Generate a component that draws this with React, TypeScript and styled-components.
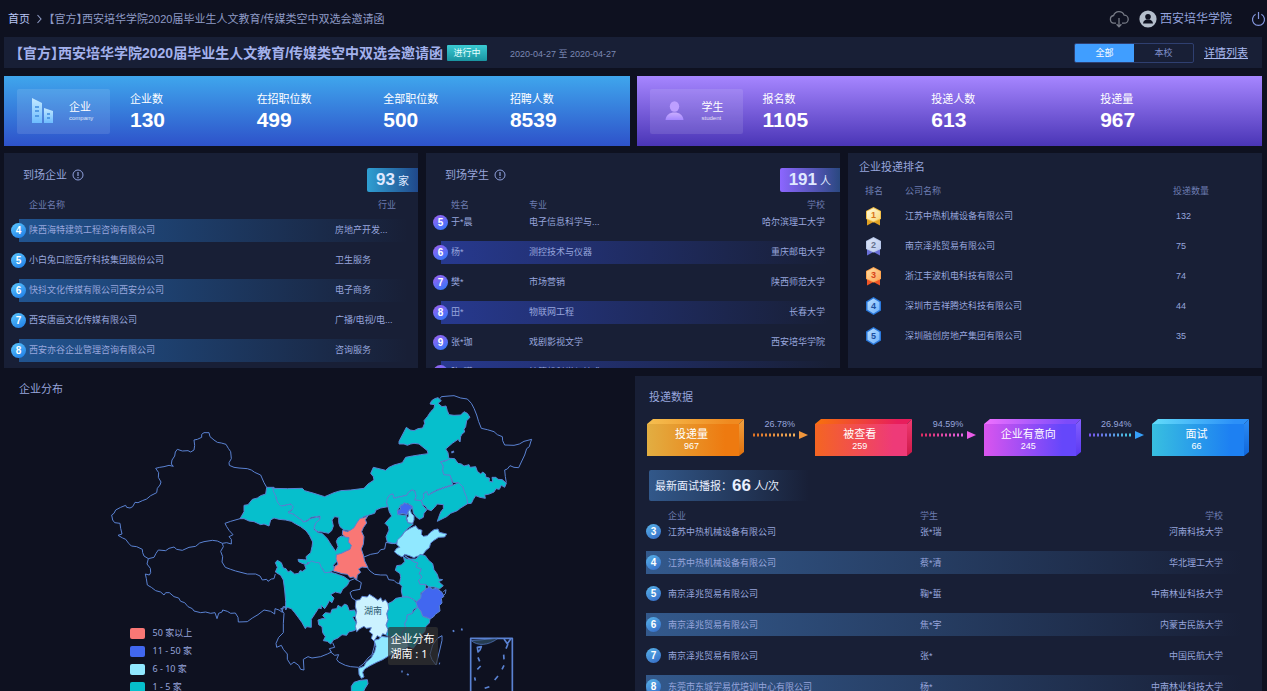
import React from 'react';
import styled, { createGlobalStyle } from 'styled-components';

const color = {
  page: '#0e1120',
  panel: '#181f36',
  text: '#97a5dc',
  muted: '#6d7cb0',
  title: '#a3b1ec',
};

const GlobalStyle = createGlobalStyle`
  * { box-sizing: border-box; }
  body {
    margin: 0;
    background: ${color.page};
    color: ${color.text};
    font-family: "Liberation Sans", "Noto Sans CJK SC", sans-serif;
    font-size: 11px;
    line-height: 14px;
  }
  h1, h2, p, dl, dt, dd, ol, ul { margin: 0; padding: 0; font-weight: normal; font-size: inherit; }
  svg { display: block; }
`;

/* ---------- page frame ---------- */

const Page = styled.div`
  height: 100vh;
  overflow: hidden;
  padding: 0 5px 0 4px;
  background: ${color.page};
`;

const TopBar = styled.header`
  display: flex;
  align-items: center;
  justify-content: space-between;
  height: 37px;
  margin-right: -5px;
  padding: 0 1px 0 4px;
`;

const Breadcrumb = styled.nav`
  display: flex;
  align-items: center;
  gap: 6px;
  white-space: nowrap;
  color: #8f9bc6;
  font-feature-settings: "halt";
`;

const HomeLink = styled.a`
  color: #b9c6f5;
  text-decoration: none;
`;

const UserArea = styled.div`
  display: flex;
  align-items: center;
  color: #93a3de;
`;

const IconButton = styled.button`
  display: flex;
  padding: 0;
  border: 0;
  background: none;
  color: inherit;
`;

const UserAvatar = styled.span`
  margin-left: 10px;
`;

const UserName = styled.span`
  margin: 0 19px 0 3px;
  font-size: 12px;
  line-height: 18px;
`;

const TitleBar = styled.div`
  display: flex;
  align-items: center;
  height: 31px;
  padding: 0 14px 0 12px;
  background: ${color.panel};
`;

const PageTitle = styled.h1`
  color: ${color.title};
  font-size: 14px;
  line-height: 20px;
  font-weight: bold;
  white-space: nowrap;
  font-feature-settings: "halt";
`;

const StatusTag = styled.span`
  width: 40px;
  margin-left: 4px;
  border-radius: 1px;
  background: linear-gradient(#3acad2, #1a94a1);
  color: #e6ffff;
  font-size: 9px;
  line-height: 16px;
  text-align: center;
`;

const DateRange = styled.span`
  margin: 2px auto 0 23px;
  color: #7c89b3;
  font-size: 9px;
  white-space: nowrap;
`;

const Segmented = styled.div`
  display: flex;
  width: 120px;
  margin-right: 10px;
  border: 1px solid #2f3f70;
  border-radius: 2px;
`;

const SegmentButton = styled.button<{ $active?: boolean }>`
  flex: 1;
  height: 18px;
  padding: 0;
  border: 0;
  border-radius: ${p => (p.$active ? '1px 0 0 1px' : '0')};
  background: ${p => (p.$active ? '#409eff' : 'transparent')};
  color: ${p => (p.$active ? '#fff' : '#7f8fca')};
  font: 9px "Liberation Sans", "Noto Sans CJK SC", sans-serif;
`;

const DetailLink = styled.a`
  color: #a9b9ee;
`;

/* ---------- summary cards ---------- */

const CardRow = styled.div`
  display: grid;
  grid-template-columns: 1fr 1fr;
  gap: 7px;
  margin-top: 8px;
`;

const SummaryCard = styled.section<{ $from: string; $to: string }>`
  display: flex;
  align-items: center;
  height: 70px;
  padding-left: 13px;
  background: linear-gradient(${p => p.$from}, ${p => p.$to});
  color: #fff;
`;

const CardLogo = styled.div`
  display: flex;
  align-items: center;
  justify-content: space-between;
  width: 93px;
  height: 45px;
  margin-right: 13px;
  padding: 0 15px;
  border-radius: 2px;
  background: rgba(255, 255, 255, 0.11);
`;

const LogoCaption = styled.div`
  width: 26px;
  line-height: 14px;
  white-space: nowrap;
`;

const LogoSub = styled.div`
  font-size: 6px;
  line-height: 8px;
  opacity: 0.8;
`;

const StatList = styled.dl`
  display: flex;
  flex: 1;
`;

const Stat = styled.div`
  flex: 1;
  padding-left: 7px;
`;

const StatLabel = styled.dt`
  line-height: 16px;
  padding-top: 2px;
`;

const StatValue = styled.dd`
  font-size: 21px;
  line-height: 26px;
  font-weight: bold;
`;

/* ---------- panels ---------- */

const PanelRow = styled.div`
  display: grid;
  grid-template-columns: repeat(3, 1fr);
  gap: 8px;
  margin-top: 7px;
`;

const Panel = styled.section`
  overflow: hidden;
  background: ${color.panel};
`;

const ListPanel = styled(Panel)`
  height: 215px;
`;

const PanelHead = styled.div`
  display: flex;
  justify-content: space-between;
  height: 42px;
  padding-left: 19px;
`;

const PanelTitle = styled.h2`
  display: flex;
  align-items: center;
  gap: 5px;
  height: 43px;
  color: ${color.text};
`;

const CountTag = styled.p<{ $from: string; $to: string }>`
  align-self: flex-start;
  height: 24px;
  margin-top: 15px;
  padding: 0 9px;
  border-radius: 2px 0 0 2px;
  background: linear-gradient(to right, ${p => p.$from}, ${p => p.$to});
  color: #dfe8ff;
  line-height: 24px;
`;

const BigNumber = styled.b`
  margin-right: 3px;
  font-size: 17px;
`;

const Table = styled.table<{ $columns: string }>`
  display: block;
  font-size: 9px;
  line-height: 14px;
  thead, tbody { display: block; }
  tr {
    display: grid;
    grid-template-columns: ${p => p.$columns};
    align-items: center;
    white-space: nowrap;
  }
  th, td { padding: 0; text-align: left; }
  th { color: ${color.muted}; font-weight: normal; }
`;

const HeadRow = styled.tr<{ $height: number }>`
  height: ${p => p.$height}px;
`;

const PanelTable = styled(Table)`
  padding: 0 10px 0 7px;
`;

const ScrollBody = styled.tbody<{ $tuck?: number }>`
  margin-top: -${p => p.$tuck ?? 0}px;
`;

const BodyRow = styled.tr<{ $height: number; $stripe?: string; $inset?: number }>`
  height: ${p => p.$height}px;
  background: ${p => (p.$stripe ? `linear-gradient(to right, ${p.$stripe}, transparent)` : 'none')} no-repeat
    right center / calc(100% - ${p => p.$inset ?? 0}px) 23px;
`;

const RightCell = styled.td<{ $pad: number }>`
  && { text-align: right; padding-right: ${p => p.$pad}px; }
`;

const RightHead = styled.th<{ $pad: number }>`
  && { text-align: right; padding-right: ${p => p.$pad}px; }
`;

const IndexDot = styled.span<{ $from: string; $to: string }>`
  display: block;
  width: 15px;
  height: 15px;
  border-radius: 50%;
  background: linear-gradient(150deg, ${p => p.$from}, ${p => p.$to});
  color: #fff;
  font-size: 10px;
  line-height: 15px;
  font-weight: bold;
  text-align: center;
`;

const RankTitle = styled.h2`
  padding: 7px 0 7px 11px;
`;

const RankTable = styled(Table)`
  padding-left: 17px;
`;

const CountCell = styled.td`
  && { padding-left: 3px; }
`;

/* ---------- bottom area ---------- */

const BottomRow = styled.div`
  display: grid;
  grid-template-columns: 1fr 1fr;
  gap: 4px;
  margin-top: 8px;
`;

const MapTitle = styled.h2`
  padding: 7px 0 0 15px;
  line-height: 12px;
`;

const MapStage = styled.div`
  position: relative;
  width: 440px;
  margin: 0 auto;
`;

const Legend = styled.ul`
  position: absolute;
  left: 32px;
  top: 229px;
  list-style: none;
  font-family: "Noto Sans", "Noto Sans CJK SC", sans-serif;
  font-size: 9px;
  line-height: 18px;
`;

const LegendItem = styled.li`
  display: flex;
  align-items: center;
  gap: 8px;
`;

const Swatch = styled.span<{ $fill: string }>`
  width: 15px;
  height: 11px;
  border-radius: 2px;
  background: ${p => p.$fill};
`;

const Tooltip = styled.div`
  position: absolute;
  left: 290px;
  top: 232px;
  padding: 4px 3px;
  border-radius: 2px;
  background: rgba(50, 50, 50, 0.7);
  color: #fff;
  font-family: "Noto Sans", "Noto Sans CJK SC", sans-serif;
  font-size: 11px;
  line-height: 15px;
  white-space: nowrap;
`;

const FunnelTitle = styled.h2`
  padding: 14px 0 15px 14px;
`;

const Funnel = styled.ol`
  display: flex;
  padding: 0 13px 0 12px;
  list-style: none;
`;

const FunnelStep = styled.li<{ $last?: boolean }>`
  display: flex;
  flex: ${p => (p.$last ? 'none' : 1)};
`;

const Block = styled.div`
  display: grid;
  flex: none;
  width: 97px;
  height: 38px;
  color: #fff;
  > * { grid-area: 1 / 1; }
`;

const BlockText = styled.div`
  z-index: 1;
  padding: 9px 8px 0 0;
  line-height: 13px;
  text-align: center;
`;

const BlockCount = styled.div`
  font-size: 9px;
  line-height: 10px;
`;

const Connector = styled.div`
  display: flex;
  flex: 1;
  flex-direction: column;
  align-items: center;
  font-size: 9px;
  line-height: 11px;
`;

const Broadcast = styled.p`
  display: flex;
  align-items: center;
  width: 160px;
  height: 31px;
  margin: 13px 0 7px 14px;
  padding-left: 6px;
  background: linear-gradient(to right, #32588a, rgba(50, 88, 138, 0));
  border-radius: 2px;
  color: #e8efff;
  white-space: nowrap;
`;

const FeedTable = styled(Table)`
  padding: 0 20px 0 11px;
`;

/* ---------- icons ---------- */

const CloudDown = () => (
  <svg width="20" height="18" viewBox="0 0 20 18" fill="none" stroke="#777b86" strokeWidth="1.3">
    <path d="M7 13.2H4.8A3.9 3.9 0 0 1 4.6 5.5 5.6 5.6 0 0 1 15.2 5.2 4 4 0 0 1 15.2 13.2H13M10 8v8.6M7.6 14.2 10 16.7l2.4-2.5" />
  </svg>
);

const Avatar = () => (
  <svg width="18" height="18" viewBox="0 0 18 18">
    <circle cx="9" cy="9" r="8.6" fill="#b4becb" />
    <circle cx="9" cy="6.7" r="2.8" fill={color.page} />
    <path d="M4 13.4c.3-2.4 2-3.4 3.4-3.9h3.2c1.4.5 3.1 1.5 3.4 3.9z" fill={color.page} />
  </svg>
);

const Power = () => (
  <svg width="15" height="16" viewBox="0 0 15 16" fill="none" stroke="#8496dc" strokeWidth="1.2">
    <path d="M7.5 1v7M4.6 3.2A6 6 0 1 0 10.4 3.2" />
  </svg>
);

const Chevron = () => (
  <svg width="7" height="10" viewBox="0 0 7 10" fill="none" stroke="#8f9bc6" strokeWidth="1.1">
    <path d="M1.5 1 5 5 1.5 9" />
  </svg>
);

const Info = () => (
  <svg width="12" height="12" viewBox="0 0 12 12" fill="none" stroke="#8fa0dc">
    <circle cx="6" cy="6" r="5" />
    <path d="M6 3v4M6 8v1.2" strokeWidth="1.2" />
  </svg>
);

const Buildings = () => (
  <svg width="23" height="26" viewBox="0 0 23 26">
    <defs>
      <linearGradient id="tower" x1="0" y1="0" x2="0" y2="1">
        <stop offset="0" stopColor="#c3e9ff" />
        <stop offset="1" stopColor="#6dbcff" />
      </linearGradient>
    </defs>
    <path d="M0 0l10 5v20H0z" fill="url(#tower)" />
    <path d="M12 10l9 3v12h-9z" fill="url(#tower)" />
    <path d="M3 9h4M3 13h4M3 18h4M15 16h3M15 20h3" stroke="#3d8ade" strokeWidth="1.5" />
  </svg>
);

const Person = () => (
  <svg width="19" height="20" viewBox="0 0 19 20">
    <defs>
      <linearGradient id="person" x1="0" y1="0" x2="0" y2="1">
        <stop offset="0" stopColor="#c9adff" />
        <stop offset="1" stopColor="#a487ff" />
      </linearGradient>
    </defs>
    <ellipse cx="9.5" cy="5.5" rx="4.7" ry="5.2" fill="#bd9fff" />
    <path d="M.5 19c.5-5 4-7.500 9-7.500s8.500 2.500 9 7.500z" fill="url(#person)" />
  </svg>
);

const medals = [
  { light: '#fffbe0', dark: '#f9d878', edge: '#f4c04a', ribbon: '#e0a224', ink: '#d8731a' },
  { light: '#dce5f8', dark: '#bccbee', edge: '#b9c8ea', ribbon: '#6a70d8', ink: '#66728e' },
  { light: '#ffdca0', dark: '#fda75c', edge: '#ffa550', ribbon: '#f05626', ink: '#d8421a' },
  { light: '#b9deff', dark: '#6fb1fb', edge: '#2a78dc', ribbon: '', ink: '#1c4fa0' },
  { light: '#b9deff', dark: '#6fb1fb', edge: '#2a78dc', ribbon: '', ink: '#1c4fa0' },
];

const Medal = ({ rank }: { rank: number }) => {
  const m = medals[rank - 1];
  return (
    <svg width="17" height="20" viewBox="0 0 17 20" role="img" aria-label={`第${rank}名`}>
      <defs>
        <linearGradient id={`medal${rank}`} x1="0" y1="0" x2="1" y2="1">
          <stop offset="0" stopColor={m.light} />
          <stop offset="1" stopColor={m.dark} />
        </linearGradient>
      </defs>
      {m.ribbon ? (
        <>
          <path d="M2 10v9.500l6.500-3.500 6.500 3.500V10z" fill={m.ribbon} />
          <path d="M8.500 1L16 5v8l-7.500 3.500L1 13V5z" fill={m.edge} />
          <path d="M8.500 2.200L15 5.600v6.800l-6.500 3L2 12.400V5.600z" fill={`url(#medal${rank})`} />
        </>
      ) : (
        <>
          <path d="M8.500 1L16 5.500v9L8.500 19 1 14.500v-9z" fill={m.edge} />
          <path d="M8.500 2.500l6 3.700v7.600l-6 3.700-6-3.700V6.200z" fill={`url(#medal${rank})`} />
        </>
      )}
      <text x="8.5" y={m.ribbon ? 12 : 13} textAnchor="middle" fontSize="9" fontWeight="bold" fill={m.ink}>{rank}</text>
    </svg>
  );
};

/* ---------- map ---------- */

const TEAL = '#06bfcc';
const SKY = '#90e8ff';
const BLUE = '#4167f0';
const RED = '#f97775';
const HOVER = '#cbf2ff';

type Region = { name: string; fill?: string; dx?: number; dy?: number; open?: boolean; pts: string };

const regions: Region[] = [
  { name: '新疆', open: true, pts: '498,322 490,308 480,285 462,277 452,270 440,266 415,264 400,262 386,256 385,248 392,236 390,215 383,205 376,193 362,189 350,187 340,180 328,170 325,158 310,158 303,163 303,172 290,178 280,180 282,196 280,210 270,216 262,212 245,213 230,208 224,216 222,228 214,240 212,252 218,259 205,256 190,260 177,262 165,265 174,278 173,292 181,306 178,315 170,325 168,338 150,347 138,357 125,362 112,368 103,367 96,380 88,384 78,382 75,376 60,382 45,390 40,400 33,405 36,420 42,428 58,430 60,445 64,462 52,466 66,474 75,478 84,490 92,498 108,500 125,508 126,518 130,528 143,536 160,532 166,520 173,510 195,512 205,505 220,501 228,508 245,511 265,502 285,499 297,489 310,485 335,481 350,483 365,490 378,488 392,492 392,478 385,470 397,464 386,452 378,440 373,430 390,424 418,416' },
  { name: '西藏', open: true, pts: '143,536 139,552 149,565 150,578 146,585 134,582 137,596 140,615 152,622 165,632 180,636 190,645 195,638 206,638 220,650 234,654 240,664 252,668 262,680 275,686 280,693 300,698 315,696 330,700 343,698 349,716 354,700 364,696 366,690 380,694 390,700 404,699 412,712 413,726 440,725 455,714 472,704 490,690 510,694 522,702 523,686 535,690 545,697 547,680 555,680' },
  { name: '青海', open: true, pts: '365,490 368,500 360,514 366,530 364,546 374,562 390,568 405,573 440,582 465,582 478,588 485,600 498,598 502,604 512,597 520,596 524,582' },
  { name: '甘肃', fill: TEAL, pts: '418,416 430,395 430,376 442,374 455,358 470,354 480,347 495,342 498,322 520,322 527,342 526,355 535,366 545,378 560,374 578,372 578,384 572,390 562,397 578,402 595,415 604,420 608,426 618,424 632,415 656,411 656,420 644,432 640,448 652,458 664,460 680,476 690,492 705,514 712,500 707,484 712,474 722,468 745,473 743,486 752,496 748,508 736,513 722,520 707,524 712,540 698,556 700,570 688,576 672,580 666,566 656,562 648,553 634,545 628,552 622,546 618,555 604,550 594,545 592,538 608,539 618,540 616,530 630,518 634,500 636,486 626,466 616,452 600,440 585,432 572,424 555,420 535,418 520,414 510,420 505,438 490,432 480,434 460,425 445,423 430,416' },
  { name: '内蒙古', fill: TEAL, dx: 390, pts: '125,325 170,326 215,325 222,332 250,340 282,350 310,338 330,332 360,330 400,325 412,312 430,300 428,290 420,280 428,262 445,266 465,271 475,262 490,255 515,248 525,232 545,228 570,224 592,221 590,212 575,200 565,192 550,190 540,192 530,196 520,192 505,192 505,184 515,165 527,142 538,150 550,152 562,146 576,144 582,130 580,122 590,110 600,95 610,85 612,74 598,72 603,62 612,56 622,53 632,62 622,70 634,80 646,78 650,92 655,104 670,106 690,105 700,95 710,100 718,112 708,122 705,140 700,148 702,156 694,162 690,170 688,186 682,178 665,190 645,207 652,218 654,232 660,238 630,245 638,258 636,272 640,284 658,285 662,298 666,314 640,322 618,330 600,340 592,346 588,334 578,342 580,354 572,362 552,360 556,348 552,332 542,330 534,336 528,346 500,352 490,355 487,342 478,344 472,352 468,368 472,380 450,384 436,390 432,400 412,406 398,410 384,425 376,442 366,452 340,450 328,440 324,428 324,412 312,410 304,420 308,438 303,452 294,460 275,456 260,454 250,444 256,428 268,418 268,408 242,412 228,422 218,426 214,420 205,415 188,402 172,398 182,392 188,380 180,372 150,378 140,366 136,350 130,338' },
  { name: '黑龙江', open: true, dx: 390, pts: '628,56 632,50 655,48 670,47 690,54 710,57 722,70 730,85 738,105 744,125 752,145 770,149 790,155 800,164 815,170 816,182 822,195 850,196 866,192 880,184 903,178 900,186 896,200 888,206 882,225 872,246 864,263 850,262 838,257 830,267 822,270 824,290 827,308' },
  { name: '吉林', fill: TEAL, dx: 390, pts: '630,245 645,243 660,235 672,236 682,250 692,252 700,258 715,254 718,262 735,260 740,274 750,282 756,276 764,282 766,292 776,294 776,304 786,306 784,292 796,292 802,298 815,299 827,310 822,322 812,316 806,328 796,326 790,336 776,342 762,345 764,355 748,352 735,347 728,358 722,370 711,371 706,350 700,335 696,320 684,308 668,308 663,298 658,285 640,284 636,272 638,258' },
  { name: '辽宁', fill: TEAL, dx: 390, pts: '572,362 580,354 578,342 588,334 592,346 618,332 640,324 666,316 684,308 696,320 702,338 708,352 711,371 690,384 680,392 660,400 648,410 620,424 624,412 630,396 638,386 638,374 620,372 612,382 602,392 590,388 584,378 576,374' },
  { name: '河北', fill: TEAL, dx: 390, pts: '470,355 478,344 487,342 490,355 500,352 528,346 534,336 545,330 552,334 556,348 552,360 572,362 576,376 588,390 580,400 578,412 566,418 556,410 548,400 545,378 530,370 512,374 500,392 502,404 528,406 526,416 532,428 548,432 530,446 515,464 502,486 492,491 470,486 466,470 475,450 473,440 463,430 475,416 483,408 476,396 472,380 468,368' },
  { name: '北京', fill: BLUE, dx: 390, pts: '500,392 510,388 508,376 516,376 520,368 534,374 545,380 540,390 532,394 530,404 514,400 502,404' },
  { name: '天津', fill: SKY, dx: 390, pts: '532,396 538,388 542,400 550,408 550,420 546,430 532,428 528,414 534,408' },
  { name: '山东', fill: SKY, dx: 600, dy: 315, pts: '281,200 288,190 297,187 288,178 290,165 304,152 312,140 328,130 345,122 352,132 364,136 362,148 368,154 380,152 388,143 400,134 412,132 416,142 438,147 432,156 414,157 400,166 390,174 386,188 376,196 364,212 348,214 340,218 326,212 312,208 304,216 290,208' },
  { name: '陕西', fill: RED, dx: 600, dy: 315, pts: '202,92 194,104 198,114 188,128 183,140 190,155 188,178 182,192 188,210 192,228 202,248 184,246 174,252 180,262 170,270 168,285 158,276 148,278 140,268 124,266 112,262 98,258 102,244 112,238 106,222 107,209 122,205 136,198 148,193 152,181 143,171 145,158 134,156 125,148 126,136 140,140 150,135 160,128 168,114 178,100 190,98' },
  { name: '四川', fill: TEAL, pts: '524,576 530,562 524,548 530,541 542,548 548,564 556,566 562,576 570,572 582,582 594,580 598,572 606,574 616,566 612,556 622,552 632,543 644,547 656,548 662,562 672,578 690,577 702,580 714,584 730,590 747,602 740,616 726,628 720,640 704,636 690,644 700,654 694,668 686,662 680,674 672,686 662,676 662,686 654,684 644,700 632,718 632,742 618,740 614,746 604,728 594,714 582,698 572,686 560,682 555,690 555,664 552,630 548,600 540,586' },
  { name: '重庆', open: true, dx: 390, dy: 450, pts: '357,152 372,146 382,152 392,158 388,178 366,182 358,188 364,204 376,212' },
  { name: '贵州', fill: TEAL, dx: 390, dy: 450, pts: '262,270 274,266 284,266 276,256 284,248 300,250 304,238 318,236 322,226 332,232 342,222 350,226 356,242 372,240 378,256 366,262 376,278 380,296 370,302 354,306 348,316 334,314 322,324 308,330 300,342 290,334 278,332 284,320 276,308 274,290 264,284' },
  { name: '云南', open: true, dx: 390, dy: 450, pts: '166,232 150,236 160,250 158,280 158,308 144,322 136,340 138,352 152,346 158,358 170,372 170,388 180,404 190,396 204,406 210,418 220,420 218,388 232,380 244,384 270,380 290,372 302,366 296,356 312,352 306,338' },
  { name: '广西', open: true, dx: 390, dy: 450, pts: '300,366 312,376 324,374 318,388 324,396 344,406 360,410 384,412 398,402 412,384 424,374 430,352 434,332' },
  { name: '山西', open: true, dx: 600, dy: 315, pts: '190,216 210,208 232,204 240,194 252,192 256,172 274,176 290,174' },
  { name: '河南', open: true, dx: 600, dy: 315, pts: '200,248 208,258 222,268 240,270 258,270 264,284 280,286 288,294 300,296' },
  { name: '安徽', fill: TEAL, dx: 600, dy: 315, pts: '308,214 318,222 328,222 340,230 352,234 346,246 362,252 356,266 364,276 354,286 358,298 374,298 376,312 360,324 362,338 348,350 336,342 322,336 306,336 302,318 304,304 296,296 300,278 298,266 284,256 288,242 302,240 312,230' },
  { name: '江苏', fill: TEAL, dx: 600, dy: 315, pts: '312,212 326,222 346,222 358,208 374,212 384,226 396,236 400,254 410,268 414,282 426,284 414,290 428,302 416,312 400,306 386,306 374,298 358,298 354,286 364,276 356,266 362,252 346,246 352,234 340,230' },
  { name: '浙江', fill: BLUE, dx: 600, dy: 315, pts: '376,312 386,306 396,312 408,310 424,322 430,334 422,340 424,354 416,362 418,378 404,388 398,396 388,402 376,396 366,394 360,378 350,366 346,352 360,340 362,326' },
  { name: '江西', fill: TEAL, dx: 600, dy: 315, pts: '258,358 274,350 286,340 306,336 322,336 336,342 346,352 350,366 338,374 334,386 320,390 318,404 312,416 316,432 304,440 306,454 286,458 268,456 256,450 262,434 256,420 262,404 258,386 264,372' },
  { name: '福建', fill: TEAL, dx: 600, dy: 315, pts: '350,366 360,378 366,394 388,402 386,414 376,424 372,440 360,452 352,470 338,490 324,484 318,466 304,454 306,440 316,432 312,416 318,404 320,390 334,386' },
  { name: '广东', fill: SKY, dx: 600, dy: 315, pts: '220,466 236,462 240,454 256,456 268,456 286,458 304,454 318,466 324,484 306,496 288,502 262,514 246,524 228,532 208,542 192,552 186,562 190,576 182,580 175,568 174,550 190,544 196,532 212,518 222,500 226,484' },
  { name: '湖南', fill: HOVER, dx: 600, dy: 315, pts: '166,346 178,344 184,334 200,336 206,328 222,338 232,346 240,338 246,350 254,344 262,356 264,370 258,386 262,404 256,420 262,434 256,450 246,446 240,458 230,452 220,468 212,460 216,448 206,440 212,428 196,430 190,424 176,432 168,440 164,424 168,412 164,396 168,380 164,364' },
  { name: '海南', fill: TEAL, dx: 600, dy: 315, pts: '152,604 160,592 178,586 200,584 202,596 192,612 184,632 166,638 152,626' },
  { name: '台湾', dx: 600, dy: 315, pts: '410,460 424,452 424,466 418,492 412,516 406,540 394,524 388,508 396,480' },
  { name: '舟山', open: true, dx: 600, dy: 315, pts: '428,320 436,314 434,326 426,334' },
];

const shift = (pts: string, dx = 0, dy = 0) =>
  pts
    .split(' ')
    .map(p => {
      const [x, y] = p.split(',').map(Number);
      return `${x + dx},${y + dy}`;
    })
    .join(' ');

const ChinaMap = () => (
  <svg width="440" height="316" viewBox="-8 45 1320 948" role="img" aria-label="企业分布地图">
    <g stroke="#5a82d2" strokeWidth="3" strokeLinejoin="round">
      {regions.map(r =>
        r.open ? (
          <polyline key={r.name} points={shift(r.pts, r.dx, r.dy)} fill="none" />
        ) : (
          <polygon key={r.name} points={shift(r.pts, r.dx, r.dy)} fill={r.fill ?? 'none'} />
        ),
      )}
      <g fill="none">
        <path d="M1052 218l8-4M902 874l4 1M919 882l5 3M1056 754l5-2M1081 748l5 1M1015 850l3 1" strokeWidth="6" />
        <path d="M1110 993V775h125v218" strokeWidth="5" />
        <path d="M1112 782c18 16 50 16 80-7z" fill="#253c50" strokeWidth="2" />
        <path d="M1130 802l12-2-4 10-6 6zM1132 832l5 12M1130 868l10-10M1122 892l2 10M1152 925l14-5M1182 900l10-12M1204 868l6-12M1210 838l-1-14M1216 806l6-14M1210 777l10 14 10-14" strokeWidth="5" />
      </g>
    </g>
    <text x="817" y="701" textAnchor="middle" fontSize="27" fill="#2b5a72">湖南</text>
  </svg>
);

const legend = [
  { label: '50 家以上', fill: RED },
  { label: '11 - 50 家', fill: BLUE },
  { label: '6 - 10 家', fill: SKY },
  { label: '1 - 5 家', fill: TEAL },
];

/* ---------- funnel ---------- */

const steps = [
  { label: '投递量', count: 967, rate: '26.78%', c: ['#e2ae42', '#ee7a10'], top: ['#f5bf50', '#f08a20'], side: ['#f0a040', '#e0700c'], dots: ['#e07020', '#f3b25e'] },
  { label: '被查看', count: 259, rate: '94.59%', c: ['#f46522', '#ee3a78'], top: ['#f8720c', '#e81e5c'], side: ['#f03a70', '#cc1848'], dots: ['#e0285c', '#e966ec'] },
  { label: '企业有意向', count: 245, rate: '26.94%', c: ['#d955ee', '#6547fb'], top: ['#f070ff', '#7c4cfa'], side: ['#8460ff', '#5a38f0'], dots: ['#7a50ee', '#43cfe2'] },
  { label: '面试', count: 66, rate: '', c: ['#38bfe0', '#1d80f2'], top: ['#62dcfa', '#2c90f8'], side: ['#2c8cf4', '#1066da'], dots: [] },
];

const heads = ['#f0963c', '#ea5ce8', '#36a0fa'];

const BlockShape = ({ index }: { index: number }) => {
  const s = steps[index];
  return (
    <svg width="97" height="38" viewBox="0 0 97 38">
      <defs>
        {[s.c, s.top].map((g, i) => (
          <linearGradient key={i} id={`face${index}${i}`}>
            <stop offset="0" stopColor={g[0]} />
            <stop offset="0.85" stopColor={g[1]} />
          </linearGradient>
        ))}
        <linearGradient id={`side${index}`} x1="0" y1="0" x2="0" y2="1">
          <stop offset="0" stopColor={s.side[0]} />
          <stop offset="1" stopColor={s.side[1]} />
        </linearGradient>
      </defs>
      <path d="M0 5L6 0h91l-5 5z" fill={`url(#face${index}1)`} />
      <path d="M92 5l5-5v33l-5 4z" fill={`url(#side${index})`} />
      <path d="M0 5h92v32H0z" fill={`url(#face${index}0)`} />
    </svg>
  );
};

const Arrow = ({ index }: { index: number }) => (
  <svg width="56" height="10" viewBox="0 0 56 10">
    <defs>
      <linearGradient id={`dots${index}`} gradientUnits="userSpaceOnUse" x1="0" y1="0" x2="44" y2="0">
        <stop offset="0" stopColor={steps[index].dots[0]} />
        <stop offset="1" stopColor={steps[index].dots[1]} />
      </linearGradient>
    </defs>
    <path d="M1 5h43" stroke={`url(#dots${index})`} strokeWidth="3" strokeDasharray="2 2" fill="none" />
    <path d="M47 1l9 4-9 4z" fill={heads[index]} />
  </svg>
);

/* ---------- data ---------- */

const companies = [
  [4, '陕西海特建筑工程咨询有限公司', '房地产开发...'],
  [5, '小白兔口腔医疗科技集团股份公司', '卫生服务'],
  [6, '快抖文化传媒有限公司西安分公司', '电子商务'],
  [7, '西安唐画文化传媒有限公司', '广播/电视/电...'],
  [8, '西安亦谷企业管理咨询有限公司', '咨询服务'],
] as const;

const students = [
  [5, '于*晨', '电子信息科学与...', '哈尔滨理工大学'],
  [6, '杨*', '测控技术与仪器', '重庆邮电大学'],
  [7, '樊*', '市场营销', '陕西师范大学'],
  [8, '田*', '物联网工程', '长春大学'],
  [9, '张*珈', '戏剧影视文学', '西安培华学院'],
  [10, '陈*瑾', '计算机科学与技术', ''],
] as const;

const ranking = [
  ['江苏中热机械设备有限公司', 132],
  ['南京泽兆贸易有限公司', 75],
  ['浙江丰波机电科技有限公司', 74],
  ['深圳市吉祥腾达科技有限公司', 44],
  ['深圳融创房地产集团有限公司', 35],
] as const;

const interviews = [
  [3, '江苏中热机械设备有限公司', '张*瑞', '河南科技大学'],
  [4, '江苏中热机械设备有限公司', '蔡*清', '华北理工大学'],
  [5, '南京泽兆贸易有限公司', '鞠*蜇', '中南林业科技大学'],
  [6, '南京泽兆贸易有限公司', '焦*宇', '内蒙古民族大学'],
  [7, '南京泽兆贸易有限公司', '张*', '中国民航大学'],
  [8, '东莞市东城学易优培训中心有限公司', '杨*', '中南林业科技大学'],
] as const;

const companyStats = [['企业数', 130], ['在招职位数', 499], ['全部职位数', 500], ['招聘人数', 8539]] as const;
const studentStats = [['报名数', 1105], ['投递人数', 613], ['投递量', 967]] as const;

const Stats = ({ items }: { items: readonly (readonly [string, number])[] }) => (
  <StatList>
    {items.map(([label, value]) => (
      <Stat key={label}>
        <StatLabel>{label}</StatLabel>
        <StatValue>{value}</StatValue>
      </Stat>
    ))}
  </StatList>
);

export default function App() {
  return (
    <Page>
      <GlobalStyle />
      <TopBar>
        <Breadcrumb aria-label="面包屑">
          <HomeLink href="#">首页</HomeLink>
          <Chevron />
          <span>【官方】西安培华学院2020届毕业生人文教育/传媒类空中双选会邀请函</span>
        </Breadcrumb>
        <UserArea>
          <IconButton aria-label="下载"><CloudDown /></IconButton>
          <UserAvatar><Avatar /></UserAvatar>
          <UserName>西安培华学院</UserName>
          <IconButton aria-label="退出"><Power /></IconButton>
        </UserArea>
      </TopBar>

      <TitleBar>
        <PageTitle>【官方】西安培华学院2020届毕业生人文教育/传媒类空中双选会邀请函</PageTitle>
        <StatusTag>进行中</StatusTag>
        <DateRange>2020-04-27 至 2020-04-27</DateRange>
        <Segmented>
          <SegmentButton $active aria-pressed="true">全部</SegmentButton>
          <SegmentButton aria-pressed="false">本校</SegmentButton>
        </Segmented>
        <DetailLink href="#">详情列表</DetailLink>
      </TitleBar>

      <CardRow>
        <SummaryCard $from="#3fa6ed" $to="#2e52ca">
          <CardLogo>
            <Buildings />
            <LogoCaption>企业<LogoSub>company</LogoSub></LogoCaption>
          </CardLogo>
          <Stats items={companyStats} />
        </SummaryCard>
        <SummaryCard $from="#a686ff" $to="#4a35b6">
          <CardLogo>
            <Person />
            <LogoCaption>学生<LogoSub>student</LogoSub></LogoCaption>
          </CardLogo>
          <Stats items={studentStats} />
        </SummaryCard>
      </CardRow>

      <PanelRow>
        <ListPanel>
          <PanelHead>
            <PanelTitle>到场企业 <Info /></PanelTitle>
            <CountTag $from="#2f9fd2" $to="#20488a"><BigNumber>93</BigNumber>家</CountTag>
          </PanelHead>
          <PanelTable $columns="18px 1fr 73px">
            <thead>
              <HeadRow $height={20}>
                <th aria-label="序号" />
                <th>企业名称</th>
                <RightHead $pad={12}>行业</RightHead>
              </HeadRow>
            </thead>
            <ScrollBody>
              {companies.map(([n, name, trade]) => (
                <BodyRow key={n} $height={30} $inset={8} $stripe={n % 2 ? undefined : '#215490'}>
                  <td><IndexDot $from="#5cc8ff" $to="#1c7ae6">{n}</IndexDot></td>
                  <td>{name}</td>
                  <td>{trade}</td>
                </BodyRow>
              ))}
            </ScrollBody>
          </PanelTable>
        </ListPanel>

        <ListPanel>
          <PanelHead>
            <PanelTitle>到场学生 <Info /></PanelTitle>
            <CountTag $from="#8c66ff" $to="#2a4880"><BigNumber>191</BigNumber>人</CountTag>
          </PanelHead>
          <PanelTable $columns="18px 78px 1fr 1fr">
            <thead>
              <HeadRow $height={20}>
                <th aria-label="序号" />
                <th>姓名</th>
                <th>专业</th>
                <RightHead $pad={5}>学校</RightHead>
              </HeadRow>
            </thead>
            <ScrollBody $tuck={8}>
              {students.map(([n, name, major, school]) => (
                <BodyRow key={n} $height={30} $inset={8} $stripe={n % 2 ? undefined : '#27398f'}>
                  <td><IndexDot $from="#a160f0" $to="#2b78fa">{n}</IndexDot></td>
                  <td>{name}</td>
                  <td>{major}</td>
                  <RightCell $pad={5}>{school}</RightCell>
                </BodyRow>
              ))}
            </ScrollBody>
          </PanelTable>
        </ListPanel>

        <ListPanel>
          <RankTitle>企业投递排名</RankTitle>
          <RankTable $columns="40px 1fr 89px">
            <thead>
              <HeadRow $height={20}>
                <th>排名</th>
                <th>公司名称</th>
                <th>投递数量</th>
              </HeadRow>
            </thead>
            <tbody>
              {ranking.map(([name, count], i) => (
                <BodyRow key={name} $height={30}>
                  <td><Medal rank={i + 1} /></td>
                  <td>{name}</td>
                  <CountCell>{count}</CountCell>
                </BodyRow>
              ))}
            </tbody>
          </RankTable>
        </ListPanel>
      </PanelRow>

      <BottomRow>
        <section>
          <MapTitle>企业分布</MapTitle>
          <MapStage>
            <ChinaMap />
            <Legend>
              {legend.map(l => (
                <LegendItem key={l.label}><Swatch $fill={l.fill} />{l.label}</LegendItem>
              ))}
            </Legend>
            <Tooltip role="tooltip">企业分布<br />湖南 : 1</Tooltip>
          </MapStage>
        </section>

        <Panel>
          <FunnelTitle>投递数据</FunnelTitle>
          <Funnel>
            {steps.map((s, i) => (
              <FunnelStep key={s.label} $last={!s.rate}>
                <Block>
                  <BlockShape index={i} />
                  <BlockText>{s.label}<BlockCount>{s.count}</BlockCount></BlockText>
                </Block>
                {s.rate && <Connector>{s.rate}<Arrow index={i} /></Connector>}
              </FunnelStep>
            ))}
          </Funnel>
          <Broadcast>最新面试播报：<BigNumber>66</BigNumber>人/次</Broadcast>
          <FeedTable $columns="22px 252px 1fr 1fr">
            <thead>
              <HeadRow $height={16}>
                <th aria-label="序号" />
                <th>企业</th>
                <th>学生</th>
                <RightHead $pad={19}>学校</RightHead>
              </HeadRow>
            </thead>
            <ScrollBody $tuck={8}>
              {interviews.map(([n, name, student, school]) => (
                <BodyRow key={n} $height={31} $stripe={n % 2 ? undefined : '#33598c'}>
                  <td><IndexDot $from="#58b4ea" $to="#3468c4">{n}</IndexDot></td>
                  <td>{name}</td>
                  <td>{student}</td>
                  <RightCell $pad={19}>{school}</RightCell>
                </BodyRow>
              ))}
            </ScrollBody>
          </FeedTable>
        </Panel>
      </BottomRow>
    </Page>
  );
}
